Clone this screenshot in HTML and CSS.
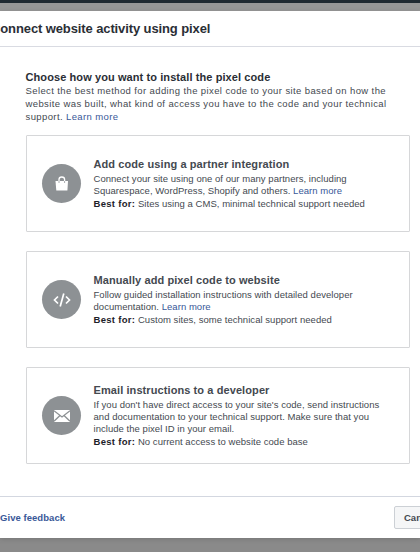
FILE: index.html
```html
<!DOCTYPE html>
<html>

<head>
    <title>Connect website activity using pixel</title>
    <meta charset="utf-8">
    <link rel="stylesheet" href="styles.css">
</head>

<body>
    <div class="topbar"></div>
    <div class="dialog">
        <div class="header">
            <h2>Connect website activity using pixel</h2>
        </div>
        <div class="content">
            <h3>Choose how you want to install the pixel code</h3>
            <p class="intro">Select the best method for adding the pixel code to your site based on how the<br>
                website was built, what kind of access you have to the code and your technical<br>
                support. <a href="#">Learn more</a></p>

            <div class="card">
                <div class="icon">
                    <svg width="14" height="16" viewBox="0 0 14 16">
                        <path d="M0.500 5h12.500l-.6 9.500H1.300z" fill="#fff" />
                        <path d="M4 6.500V3.500a2.800 2.500 0 0 1 5.600 0v3" fill="none" stroke="#fff" stroke-width="1.300" />
                        <path d="M4 5v2M9.600 5v2" stroke="#aaadb0" stroke-width="1" />
                    </svg>
                </div>
                <div class="text">
                    <h4>Add code using a partner integration</h4>
                    <p>Connect your site using one of our many partners, including<br>
                        Squarespace, WordPress, Shopify and others. <a href="#">Learn more</a></p>
                    <p class="best"><b>Best for:</b> Sites using a CMS, minimal technical support needed</p>
                </div>
            </div>

            <div class="card">
                <div class="icon">
                    <svg width="18" height="16" viewBox="0 0 18 16">
                        <path d="M5 4.500L1.500 8 5 11.500M13 4.500L16.500 8 13 11.500M10.800 1.500L7.200 14.500" fill="none" stroke="#fff" stroke-width="1.700" />
                    </svg>
                </div>
                <div class="text">
                    <h4>Manually add pixel code to website</h4>
                    <p>Follow guided installation instructions with detailed developer<br>
                        documentation. <a href="#">Learn more</a></p>
                    <p class="best"><b>Best for:</b> Custom sites, some technical support needed</p>
                </div>
            </div>

            <div class="card">
                <div class="icon">
                    <svg width="16" height="12" viewBox="0 0 16 12">
                        <rect width="16" height="12" fill="#fff" />
                        <path d="M0 .8l8 6.200 8-6.200M0 11.200l6-5.700M16 11.200l-6-5.700" fill="none" stroke="#8d9194" stroke-width="1.300" />
                    </svg>
                </div>
                <div class="text">
                    <h4>Email instructions to a developer</h4>
                    <p>If you don't have direct access to your site's code, send instructions<br>
                        and documentation to your technical support. Make sure that you<br>
                        include the pixel ID in your email.</p>
                    <p class="best"><b>Best for:</b> No current access to website code base</p>
                </div>
            </div>
        </div>
        <div class="footer">
            <a href="#">Give feedback</a>
            <button type="button">Cancel</button>
        </div>
    </div>
</body>

</html>
```
FILE: styles.css
```css
body {
    margin: 0;
    height: 552px;
    overflow: hidden;
    background-color: #8a8a8a;
    font-family: "Liberation Sans", Arial, sans-serif;
    color: #444950;
}

h2,
h3,
h4,
p {
    margin: 0;
    white-space: nowrap;
}

a {
    color: #385898;
    text-decoration: none;
}

.topbar {
    height: 3px;
    background-color: #202a32;
    border-bottom: 8px solid #979797;
}

.dialog {
    height: 527px;
    background-color: #fff;
    box-shadow: 0 1px 5px rgba(0, 0, 0, 0.15);
    display: flex;
    flex-direction: column;
}

.header {
    height: 35px;
    border-bottom: 1px solid #d9dbe2;
}

.header h2 {
    margin-left: -9px;
    font-size: 13px;
    line-height: 35px;
    letter-spacing: -0.11px;
    color: #2a2e35;
}

.content {
    flex: 1;
    padding: 23px 10px 0 26px;
}

h3 {
    font-size: 11px;
    line-height: 14px;
    letter-spacing: 0.09px;
    color: #2a2e35;
}

.intro {
    height: 51px;
    font-size: 9.5px;
    line-height: 13px;
    letter-spacing: 0.39px;
}

h3,
.intro {
    margin-left: -0.5px;
}

.card {
    box-sizing: border-box;
    height: 97px;
    margin-bottom: 19px;
    padding-left: 15px;
    border: 1px solid #d6d7d9;
    border-radius: 1px;
    display: flex;
    align-items: center;
}

.icon {
    width: 39px;
    height: 39px;
    margin-right: 12.5px;
    border-radius: 50%;
    background-color: #8d9194;
    display: flex;
    align-items: center;
    justify-content: center;
}

.text h4 {
    padding-bottom: 2px;
    font-size: 11px;
    line-height: 13px;
    letter-spacing: 0.09px;
}

.text p {
    font-size: 9.5px;
    line-height: 12px;
    letter-spacing: 0.04px;
}

.text .best {
    line-height: 13px;
}

.best b {
    color: #1d2129;
    letter-spacing: 0.3px;
}

.footer {
    height: 41px;
    border-top: 1px solid #d3d7e0;
    display: flex;
    align-items: center;
    justify-content: space-between;
}

.footer a {
    font-size: 9.5px;
    font-weight: bold;
    letter-spacing: 0.05px;
}

.footer button {
    flex: none;
    box-sizing: border-box;
    width: 50px;
    height: 23px;
    margin-right: -24px;
    padding: 0 0 0 9px;
    border: 1px solid #ccd0d5;
    border-radius: 2px;
    background-color: #f5f6f7;
    color: #444950;
    font: bold 9.5px "Liberation Sans", Arial, sans-serif;
    text-align: left;
}
```
